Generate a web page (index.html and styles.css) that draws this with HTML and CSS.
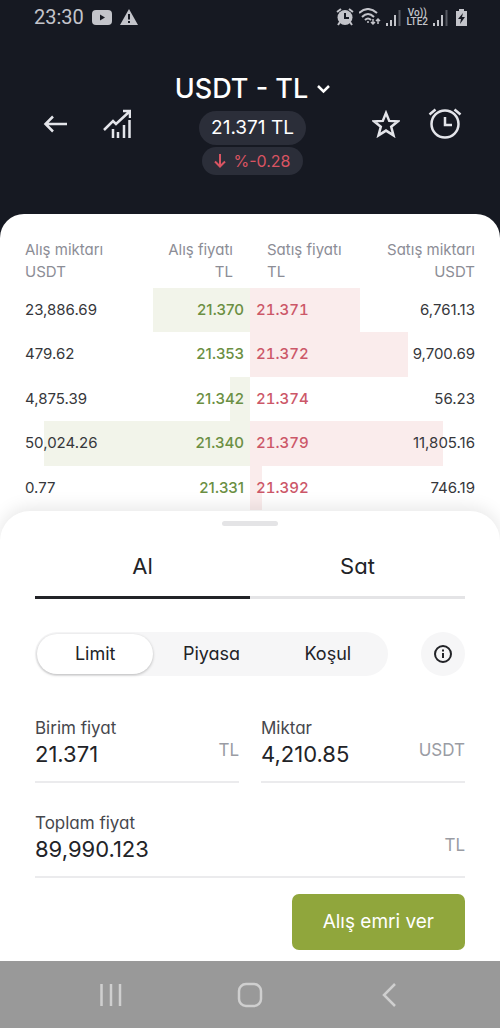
FILE: index.html
```html
<!DOCTYPE html>
<html lang="tr">
<head>
    <meta charset="UTF-8">
    <meta name="viewport" content="width=device-width, initial-scale=1.0">
    <title>USDT - TL</title>
    <link rel="stylesheet" href="styles.css">
</head>
<body>
    <div class="status-bar">
        <div class="status-left">
            <span>23:30</span>
            <svg width="20" height="15" viewBox="0 0 20 15"><rect width="20" height="15" rx="4" fill="#c3c4ca"/><path d="M8 4.5l5 3-5 3z" fill="#161922"/></svg>
            <svg width="18" height="16" viewBox="0 0 18 16"><path d="M9 0l9 16H0z" fill="#c3c4ca"/><path d="M9 5v5.5M9 12v2" stroke="#161922" stroke-width="2"/></svg>
        </div>
        <div class="status-right">
            <svg width="18" height="18" viewBox="0 0 18 18"><circle cx="9" cy="9.500" r="7.500" fill="#c3c4ca"/><path d="M1 4l4-3M17 4l-4-3M4 14l-2 3M14 14l2 3" stroke="#c3c4ca" stroke-width="2"/><path d="M9 5v5h4" fill="none" stroke="#161922" stroke-width="2"/></svg>
            <svg width="22" height="18" viewBox="0 0 22 18" fill="none" stroke="#c3c4ca" stroke-width="2"><path d="M0 5q9-8 18 0M3 9q6-6 12 0M6 12q3-3 6 0"/><circle cx="9" cy="14" r="1" fill="#c3c4ca" stroke="none"/><path d="M14 11v5M12 14l2 2 2-2M19 16v-5M17 13l2-2 2 2" stroke-width="1.5"/></svg>
            <svg width="15" height="17" viewBox="0 0 15 17" stroke="#c3c4ca" stroke-width="2"><path d="M1 14v3M5 11v6M9 6v11"/><path d="M13.500 1v16" stroke="#555861"/></svg>
            <span class="lte"><span>Vo))</span><span>LTE2</span></span>
            <svg width="15" height="17" viewBox="0 0 15 17" stroke="#c3c4ca" stroke-width="2"><path d="M1 14v3M5 11v6M9 6v11"/><path d="M13.500 1v16" stroke="#555861"/></svg>
            <svg class="battery" width="11" height="17" viewBox="0 0 11 17"><path d="M3 0h5v2h3v15H0V2h3z" fill="#c3c4ca"/><path d="M7 4l-5 6h3l-1 5 5-7H6z" fill="#161922"/></svg>
        </div>
    </div>

    <header class="header">
        <div class="header-icons">
            <button aria-label="Geri"><svg width="24" height="18" viewBox="0 0 24 18" fill="none" stroke="#e4e5ea" stroke-width="2.500"><path d="M24 9H3M10 1.500L2.500 9l7.500 7.500"/></svg></button>
            <button aria-label="Grafik"><svg width="28" height="29" viewBox="0 0 28 29" fill="none" stroke="#e4e5ea" stroke-width="2.500"><path d="M1 21l9-9 3 3L26 3M20 2h7v7"/><path d="M10 20v9M15 23v6M21 16v13M26.500 11v18"/></svg></button>
        </div>
        <div class="pair">
            <h1><button class="pair-name">USDT - TL <svg width="13" height="9" viewBox="0 0 13 9" fill="none" stroke="#fff" stroke-width="2.500"><path d="M1 1l5.500 5.500L12 1"/></svg></button></h1>
            <div class="price">21.371 TL</div>
            <div class="change"><svg width="12" height="14" viewBox="0 0 12 14" fill="none" stroke="#d95462" stroke-width="2"><path d="M6 0v12M1 7.500l5 5 5-5"/></svg>%-0.28</div>
        </div>
        <div class="header-icons right">
            <button aria-label="Favori"><svg width="28" height="28" viewBox="0 0 28 28" fill="none" stroke="#e4e5ea" stroke-width="2.500"><path d="M14 3l3.200 7.900 8.800.4-6.800 5.500 2.300 8.600L14 20.600l-7.500 4.800 2.300-8.600L2 11.300l8.800-.4z"/></svg></button>
            <button aria-label="Alarm"><svg width="34" height="32" viewBox="0 0 34 32" fill="none" stroke="#e4e5ea" stroke-width="2.500"><circle cx="17" cy="16" r="13.500"/><path d="M17 9v8h7M1.500 6.500l6-5M32.500 6.500l-6-5"/></svg></button>
        </div>
    </header>

    <main>
        <table class="book">
            <thead>
                <tr>
                    <th>Alış miktarı<br>USDT</th>
                    <th>Alış fiyatı<br>TL</th>
                    <th>Satış fiyatı<br>TL</th>
                    <th>Satış miktarı<br>USDT</th>
                </tr>
            </thead>
            <tbody>
                <tr style="--bid: 30.6%; --ask: 72%"><td>23,886.69</td><td>21.370</td><td>21.371</td><td>6,761.13</td></tr>
                <tr style="--bid: 50%; --ask: 81.6%"><td>479.62</td><td>21.353</td><td>21.372</td><td>9,700.69</td></tr>
                <tr style="--bid: 46%; --ask: 50%"><td>4,875.39</td><td>21.342</td><td>21.374</td><td>56.23</td></tr>
                <tr style="--bid: 8.8%; --ask: 88.6%"><td>50,024.26</td><td>21.340</td><td>21.379</td><td>11,805.16</td></tr>
                <tr style="--bid: 50%; --ask: 52.4%"><td>0.77</td><td>21.331</td><td>21.392</td><td>746.19</td></tr>
            </tbody>
        </table>

        <form class="sheet">
            <div class="handle"></div>
            <div class="tabs">
                <button type="button" class="active">Al</button>
                <button type="button">Sat</button>
            </div>

            <div class="types">
                <div class="segment">
                    <button type="button" class="active">Limit</button>
                    <button type="button">Piyasa</button>
                    <button type="button">Koşul</button>
                </div>
                <button type="button" class="info" aria-label="Bilgi"><svg width="20" height="20" viewBox="0 0 20 20" fill="none" stroke="#222327" stroke-width="2"><circle cx="10" cy="10" r="8"/><path d="M10 9v5M10 5.500v2"/></svg></button>
            </div>

            <div class="fields">
                <div class="field">
                    <label for="price">Birim fiyat</label>
                    <div class="field-row"><input id="price" type="text" value="21.371"><span>TL</span></div>
                </div>
                <div class="field">
                    <label for="amount">Miktar</label>
                    <div class="field-row"><input id="amount" type="text" value="4,210.85"><span>USDT</span></div>
                </div>
                <div class="field wide">
                    <label for="total">Toplam fiyat</label>
                    <div class="field-row"><input id="total" type="text" value="89,990.123"><span>TL</span></div>
                </div>
            </div>

            <button type="submit" class="submit">Alış emri ver</button>
        </form>
    </main>

    <nav class="nav-bar">
        <button aria-label="Son uygulamalar"><svg width="22" height="24" viewBox="0 0 22 24" stroke="#cfcfcf" stroke-width="2.500"><path d="M1.500 1v22M11 1v22M20 1v22"/></svg></button>
        <button aria-label="Ana ekran"><svg width="26" height="26" viewBox="0 0 26 26" fill="none" stroke="#cfcfcf" stroke-width="2.500"><rect x="2" y="2" width="22" height="22" rx="7"/></svg></button>
        <button aria-label="Geri dön"><svg width="14" height="24" viewBox="0 0 14 24" fill="none" stroke="#cfcfcf" stroke-width="2.500"><path d="M13 1L2 12l11 11"/></svg></button>
    </nav>
</body>
</html>
```
FILE: styles.css
```css
* {
    box-sizing: border-box;
}
body {
    margin: 0;
    min-height: 100vh;
    display: flex;
    flex-direction: column;
    background-color: #161922;
    color: #222327;
    font-family: Inter, "Liberation Sans", sans-serif;
    font-feature-settings: "cv11";
}
button, input {
    font: inherit;
    font-feature-settings: inherit;
    color: inherit;
    background: none;
    border: none;
    padding: 0;
}
button {
    cursor: pointer;
}
svg {
    display: block;
    flex-shrink: 0;
}

/* phone status bar */
.status-bar {
    display: flex;
    justify-content: space-between;
    height: 34px;
    padding: 0 33px 0 34px;
    color: #c3c4ca;
    font-family: Roboto, sans-serif;
    font-size: 20px;
}
.status-left, .status-right {
    display: flex;
    align-items: center;
    gap: 8px;
}
.status-right {
    gap: 5px;
}
.lte {
    display: flex;
    flex-direction: column;
    align-items: center;
    font-size: 10px;
    line-height: 9px;
    font-weight: 500;
}
.battery {
    margin-left: 3px;
}

/* header */
.header {
    display: grid;
    grid-template-columns: 1fr auto 1fr;
    padding: 38px 38px 39px 43px;
}
.header-icons {
    display: flex;
    align-items: center;
    gap: 36px;
}
.header-icons.right {
    justify-content: flex-end;
    gap: 28px;
}
.pair {
    display: flex;
    flex-direction: column;
    align-items: center;
    color: #fff;
}
.pair h1 {
    margin: 0 0 5px;
    font-size: 27px;
    line-height: 34px;
    font-weight: 500;
}
.pair-name {
    display: flex;
    align-items: center;
    gap: 9px;
}
.price, .change {
    background-color: #2b2e39;
    border-radius: 17px;
}
.price {
    padding: 0 12px;
    font-size: 19px;
    line-height: 34px;
}
.change {
    display: flex;
    align-items: center;
    gap: 7px;
    margin-top: 2px;
    padding: 0 12px;
    font-size: 16px;
    line-height: 28px;
    color: #d95462;
}

/* order book */
main {
    flex: 1;
    display: flex;
    flex-direction: column;
    background-color: #fff;
    border-radius: 24px 24px 0 0;
    overflow: hidden;
}
.book {
    width: 100%;
    margin-top: 25px;
    table-layout: fixed;
    border-collapse: collapse;
    font-size: 15px;
    line-height: 22px;
}
.book th {
    padding: 0 17px 5px;
    font-weight: 400;
    color: #8c8d96;
    text-align: left;
}
.book td {
    padding: 11px 6px;
    color: #36373b;
}
.book tr:nth-child(even) td {
    padding-bottom: 12px;
}
.book th:first-child, .book td:first-child {
    padding-left: 25px;
}
.book th:last-child, .book td:last-child {
    padding-right: 25px;
    text-align: right;
}
.book th:last-child {
    padding-left: 0;
}
.book th:nth-child(2), .book td:nth-child(2) {
    text-align: right;
}
.book td:nth-child(2) {
    color: #6b8f43;
    font-weight: 500;
}
.book td:nth-child(3) {
    color: #cc5768;
    font-weight: 500;
    font-variant-numeric: tabular-nums;
}
/* depth bars grow from the middle of the row */
.book tbody tr {
    background: linear-gradient(to right, transparent var(--bid), #f2f4ea var(--bid) 50%, #faecec 50% var(--ask), transparent var(--ask));
}

/* order sheet */
.sheet {
    flex: 1;
    display: flex;
    flex-direction: column;
    padding: 10px 35px 11px;
    margin-top: 1px;
    background-color: #fff;
    border-radius: 30px 30px 0 0;
    box-shadow: 0 -3px 18px rgba(0, 0, 0, 0.1);
}
.handle {
    width: 56px;
    height: 5px;
    margin: 0 auto;
    border-radius: 3px;
    background-color: #e4e4e6;
}
.tabs {
    display: flex;
    margin-top: 10px;
}
.tabs button {
    flex: 1;
    padding: 15px 0;
    font-size: 22px;
    line-height: 30px;
    border-bottom: 3px solid #e4e4e6;
}
.tabs button.active {
    border-color: #222327;
}
.types {
    display: flex;
    align-items: center;
    justify-content: space-between;
    gap: 33px;
    margin-top: 33px;
}
.segment {
    flex: 1;
    display: flex;
    padding: 2px;
    border-radius: 22px;
    background-color: #f6f6f7;
}
.segment button {
    flex: 1;
    font-size: 18px;
    line-height: 40px;
    border-radius: 20px;
}
.segment button.active {
    background-color: #fff;
    box-shadow: 0 1px 3px rgba(0, 0, 0, 0.25);
}
.info {
    display: flex;
    align-items: center;
    justify-content: center;
    width: 44px;
    height: 44px;
    border-radius: 50%;
    background-color: #f6f6f7;
}
.fields {
    display: grid;
    grid-template-columns: minmax(0, 1fr) minmax(0, 1fr);
    gap: 28px 22px;
    margin-top: 40px;
}
.field {
    border-bottom: 2px solid #ebebed;
    padding-bottom: 13px;
}
.field.wide {
    grid-column: 1 / 3;
}
.field label {
    display: block;
    font-size: 17px;
    line-height: 24px;
    color: #46474d;
}
.field-row {
    display: flex;
    align-items: center;
}
.field input {
    flex: 1;
    min-width: 0;
    height: 27px;
    font-size: 22px;
    outline: none;
}
.field-row span {
    font-size: 17px;
    line-height: 20px;
    padding-bottom: 8px;
    color: #9a9ca4;
}
.submit {
    align-self: flex-end;
    margin-top: auto;
    padding: 0 31px;
    font-size: 19px;
    line-height: 56px;
    border-radius: 7px;
    background-color: #90a63c;
    color: #fff;
}

/* phone navigation */
.nav-bar {
    display: flex;
    padding: 0 41px;
    height: 67px;
    background-color: #999;
}
.nav-bar button {
    flex: 1;
    display: flex;
    align-items: center;
    justify-content: center;
}
```
